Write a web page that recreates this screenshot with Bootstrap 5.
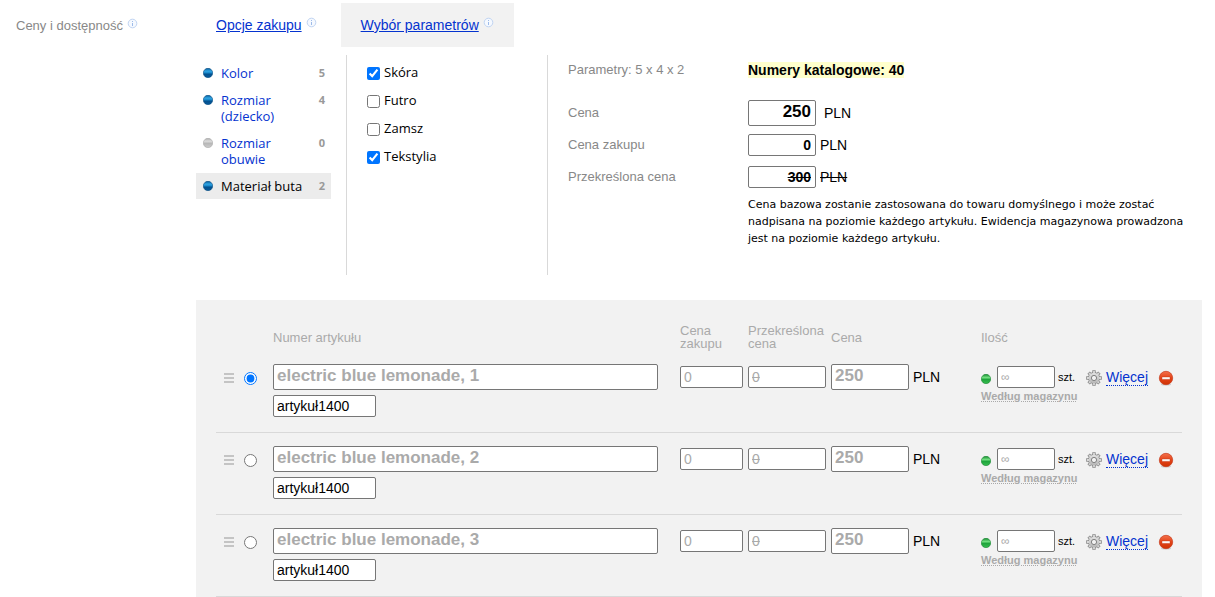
<!DOCTYPE html>
<html lang="pl">
<head>
<meta charset="utf-8">
<meta name="viewport" content="width=device-width, initial-scale=1">
<title>Ceny i dostępność</title>
<link href="https://cdn.jsdelivr.net/npm/bootstrap@5.3.0/dist/css/bootstrap.min.css" rel="stylesheet">
<style>
body{font:14px/16px "Liberation Sans",Arial,sans-serif;color:#000;background:#fff}
a{color:#0433cf}
.side-label{width:196px;padding:18px 0 0 16px}
.ui-label{font-size:13px;color:#888}
.main-area{padding:3px 13px 0 0;min-width:0}
.tab-item{height:44px;padding:0 20px}
.tab-item.active{background:#f2f2f2}
.info{width:11px;height:11px;margin-bottom:6px}
.param-area{min-height:220px;margin-top:8px}
.param-list{width:150px;padding:5px 15px 0 0;gap:1px}
.param-item{padding:5px 6px 5px 7px;font:13px/16px "Open Sans",sans-serif}
.param-item a{text-decoration:none;width:84px}
.param-item.active{background:#ececec}
.param-item.active a{color:#000}
.param-count{font:bold 11px/16px "Open Sans",sans-serif;color:#999}
.dot{width:10px;height:10px;margin:3px 8px 0 0}
.value-list{width:201px;padding:3px 20px 0;border-left:1px solid #d9d9d9;font:13px/16px "Open Sans",sans-serif}
.value-list label{height:28px;gap:4px}
.value-list input{width:13px;height:13px;margin:2px 0 0}
.price-area{border-left:1px solid #d9d9d9;padding:7px 8px 0 20px}
.price-label{width:180px}
.hl{background:#ffc;font-weight:bold}
.box{border:1px solid #767676;border-radius:2px;background:#fff;height:22px;padding:0 4px 0 3px;font-size:14px;color:#000}
.box.tall{height:26px;font-size:17px;font-weight:bold;padding-bottom:2px}
.w-price{width:68px;text-align:right;font-weight:bold}
.pad-top{margin-top:22px}
.row-gap-s{margin-top:10px}
.strike{text-decoration:line-through}
.note{font:11px/17px "DejaVu Sans",sans-serif;max-width:440px;margin:8px 0 0}
.article-panel{background:#f2f2f2;margin-top:25px;padding:24px 20px 0}
.articles{width:100%;table-layout:fixed;border-collapse:collapse}
.articles th{font:13px/13px "Liberation Sans",Arial,sans-serif;color:#aaa;padding:0 0 1px;height:27px;vertical-align:middle}
.articles td{border-bottom:1px solid #d9d9d9;padding:13px 0 15px;vertical-align:top}
.articles .box{color:#aaa}
.articles .box.code{color:#000;width:103px;margin-top:5px}
.name-wrap{padding-right:22px}
.cell-gap{padding-right:5px}
.line{height:26px}
.drop{padding-top:2px}
.w-cost{width:78px}
.w-qty{width:58px;margin:0 3px 0 6px}
.articles .w-qty{font-size:12px}
.unit{font-size:11px}
.plain{border:0;background:none;padding:0;line-height:0}
.stock{display:block;font-size:11px;line-height:12px;font-weight:bold;color:#aaa;text-decoration:underline dotted 1px;text-underline-offset:1px}
.more{text-decoration:none;border-bottom:1px dotted #0433cf;line-height:15px}
</style>
</head>
<body>
<svg class="position-absolute" width="0" height="0" aria-hidden="true">
<defs>
<linearGradient id="gb" x2="0" y2="1"><stop stop-color="#055c9c"/><stop offset=".3" stop-color="#31a5e3"/><stop offset=".5" stop-color="#1685c8"/><stop offset=".6" stop-color="#03518f"/><stop offset="1" stop-color="#07599a"/></linearGradient>
<linearGradient id="gg" x2="0" y2="1"><stop stop-color="#aaa"/><stop offset=".3" stop-color="#ddd"/><stop offset=".55" stop-color="#b8b8b8"/><stop offset="1" stop-color="#ccc"/></linearGradient>
<linearGradient id="gn" x2="0" y2="1"><stop stop-color="#158b30"/><stop offset=".35" stop-color="#72df80"/><stop offset=".55" stop-color="#1fa53c"/><stop offset="1" stop-color="#38bd50"/></linearGradient>
<linearGradient id="gr" x2="0" y2="1"><stop stop-color="#f3714c"/><stop offset=".5" stop-color="#e44319"/><stop offset="1" stop-color="#cf3303"/></linearGradient>
<linearGradient id="gc" x2="0" y2="1"><stop stop-color="#e2e2e2"/><stop offset="1" stop-color="#b5b5b5"/></linearGradient>
</defs>
<symbol id="info" viewBox="0 0 11 11"><circle cx="5.5" cy="5.5" r="4.3" fill="#f5f9ff" stroke="#c0d4f2"/><path d="M5.5 3v1M5.5 5v3" stroke="#9dbbe9"/></symbol>
<symbol id="blue" viewBox="0 0 10 10"><circle cx="5" cy="5" r="4.7" fill="url(#gb)" stroke="#064a80" stroke-width=".6"/></symbol>
<symbol id="grey" viewBox="0 0 10 10"><circle cx="5" cy="5" r="4.7" fill="url(#gg)" stroke="#aaa" stroke-width=".6"/></symbol>
<symbol id="green" viewBox="0 0 10 10"><circle cx="5" cy="5" r="4.7" fill="url(#gn)" stroke="#188431" stroke-width=".6"/></symbol>
<symbol id="grip" viewBox="0 0 10 10"><path d="M0 1h10M0 5h10M0 9h10" stroke="#c4c4c4" stroke-width="2"/></symbol>
<symbol id="gear" viewBox="0 0 16 16"><g stroke="#8a8a8a" stroke-width="3.4"><path d="M8 .2v15.6M.2 8h15.6M2.6 2.6l10.8 10.8M2.6 13.4L13.4 2.6"/></g><circle cx="8" cy="8" r="6" fill="#8a8a8a"/><g stroke="#d8d8d8" stroke-width="1.8"><path d="M8 1v14M1 8h14M3.1 3.1l9.8 9.8M3.1 12.9L12.9 3.1"/></g><circle cx="8" cy="8" r="5.3" fill="url(#gc)"/><circle cx="8" cy="8" r="2.6" fill="#f2f2f2" stroke="#808080"/></symbol>
<symbol id="remove" viewBox="0 0 16 16"><ellipse cx="8" cy="14.6" rx="5" ry="1" fill="#ccc"/><circle cx="8" cy="8" r="6.7" fill="url(#gr)" stroke="#c53b1b" stroke-width=".7"/><path d="M4 7h8v2.4H4z" fill="#fff" stroke="#b93716" stroke-width=".4"/></symbol>
</svg>

<div class="d-flex">
  <div class="side-label ui-label flex-shrink-0 d-flex align-items-start gap-1">Ceny i dostępność<svg class="info"><use href="#info"/></svg></div>
  <main class="main-area flex-grow-1">
    <nav class="d-flex">
      <div class="tab-item d-flex align-items-center gap-1"><a href="#">Opcje zakupu</a><svg class="info"><use href="#info"/></svg></div>
      <div class="tab-item active d-flex align-items-center gap-1 ms-1"><a href="#">Wybór parametrów</a><svg class="info"><use href="#info"/></svg></div>
    </nav>
    <section class="param-area d-flex">
      <div class="param-list d-flex flex-column flex-shrink-0">
        <div class="param-item d-flex"><svg class="dot"><use href="#blue"/></svg><a href="#">Kolor</a><span class="param-count ms-auto">5</span></div>
        <div class="param-item d-flex"><svg class="dot"><use href="#blue"/></svg><a href="#">Rozmiar (dziecko)</a><span class="param-count ms-auto">4</span></div>
        <div class="param-item d-flex"><svg class="dot"><use href="#grey"/></svg><a href="#">Rozmiar obuwie</a><span class="param-count ms-auto">0</span></div>
        <div class="param-item active d-flex"><svg class="dot"><use href="#blue"/></svg><a href="#" class="text-nowrap">Materiał buta</a><span class="param-count ms-auto">2</span></div>
      </div>
      <div class="value-list flex-shrink-0">
        <label class="d-flex align-items-center"><input type="checkbox" checked>Skóra</label>
        <label class="d-flex align-items-center"><input type="checkbox">Futro</label>
        <label class="d-flex align-items-center"><input type="checkbox">Zamsz</label>
        <label class="d-flex align-items-center"><input type="checkbox" checked>Tekstylia</label>
      </div>
      <div class="price-area flex-grow-1">
        <div class="d-flex"><div class="price-label ui-label flex-shrink-0">Parametry: 5 x 4 x 2</div><div><span class="hl">Numery katalogowe: 40</span></div></div>
        <div class="d-flex align-items-center pad-top"><label class="price-label ui-label" for="p1">Cena</label><input id="p1" class="box tall w-price me-2" value="250">PLN</div>
        <div class="d-flex align-items-center mt-2"><label class="price-label ui-label" for="p2">Cena zakupu</label><input id="p2" class="box w-price me-1" value="0">PLN</div>
        <div class="d-flex align-items-center row-gap-s"><label class="price-label ui-label" for="p3">Przekreślona cena</label><input id="p3" class="box w-price me-1 strike" value="300"><span class="strike">PLN</span></div>
        <div class="d-flex"><div class="price-label flex-shrink-0"></div><p class="note">Cena bazowa zostanie zastosowana do towaru domyślnego i może zostać nadpisana na poziomie każdego artykułu. Ewidencja magazynowa prowadzona jest na poziomie każdego artykułu.</p></div>
      </div>
    </section>
    <section class="article-panel">
      <table class="articles">
        <colgroup><col style="width:28px"><col style="width:29px"><col><col style="width:68px"><col style="width:83px"><col style="width:150px"><col style="width:105px"><col style="width:72px"><col style="width:24px"></colgroup>
        <thead><tr><th></th><th></th><th>Numer artykułu</th><th>Cena zakupu</th><th>Przekreślona cena</th><th>Cena</th><th>Ilość</th><th></th><th></th></tr></thead>
        <tbody id="rows"></tbody>
      </table>
    </section>
  </main>
</div>
<script src="https://cdn.jsdelivr.net/npm/bootstrap@5.3.0/dist/js/bootstrap.bundle.min.js"></script>
<script>
document.getElementById('rows').innerHTML = [1, 2, 3].map(n => `
<tr>
<td><div class="line drop d-flex align-items-center ps-2"><button class="plain" aria-label="Przesuń"><svg width="10" height="10"><use href="#grip"/></svg></button></div></td>
<td><div class="line drop d-flex align-items-center"><input type="radio" name="main" class="m-0" aria-label="Artykuł domyślny ${n}" ${n === 1 ? 'checked' : ''}></div></td>
<td><div class="name-wrap"><input class="box tall w-100 d-block" aria-label="Numer artykułu" value="electric blue lemonade, ${n}"><input class="box code d-block" aria-label="Kod" value="artykuł1400"></div></td>
<td><div class="line cell-gap d-flex align-items-center"><input class="box w-100" aria-label="Cena zakupu" value="0"></div></td>
<td><div class="line cell-gap d-flex align-items-center"><input class="box w-100 strike" aria-label="Przekreślona cena" value="0"></div></td>
<td><div class="line d-flex align-items-center gap-1"><input class="box tall w-cost" aria-label="Cena" value="250">PLN</div></td>
<td><div class="line d-flex align-items-center"><svg class="flex-shrink-0 mt-1" width="10" height="10"><use href="#green"/></svg><input class="box w-qty" aria-label="Ilość" value="∞"><span class="unit">szt.</span></div><a href="#" class="stock text-nowrap">Według magazynu</a></td>
<td><div class="line drop d-flex align-items-center gap-1"><svg width="16" height="16"><use href="#gear"/></svg><a href="#" class="more">Więcej</a></div></td>
<td><div class="line drop d-flex align-items-center"><button class="plain" aria-label="Usuń"><svg width="16" height="16"><use href="#remove"/></svg></button></div></td>
</tr>`).join('');
</script>
</body>
</html>
